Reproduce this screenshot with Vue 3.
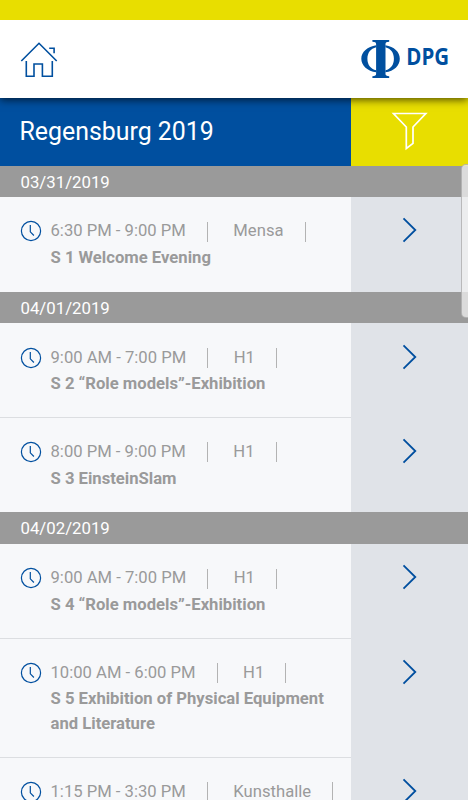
<template>
  <div class="screen">
    <div class="status-bar"></div>

    <header class="app-header">
      <!-- Home -->
      <svg class="home-icon" width="38" height="38" viewBox="0 0 38 38" fill="none">
        <path d="M1.3 21L19 3.300l17.700 17.700" />
        <path d="M6.300 21v15.200h7.700V24h8.400v12.200h9.900V21" />
        <path d="M29.200 8.300h4.900v5" />
      </svg>

      <!-- Logo -->
      <div class="logo">
        <svg width="39" height="38" viewBox="0 0 39 38" fill="#004f9f">
          <path d="M11.4 0h16.8v1.7c-2.6.2-3.7.7-3.7 2.2v30.2c0 1.5 1.1 2 3.7 2.2V38H11.4v-1.7c2.6-.2 3.7-.7 3.7-2.2V3.9c0-1.5-1.1-2-3.7-2.2z" />
          <path d="M15.2 5.3C6.5 6.500.3 12 .3 18.800s6.200 12.400 14.900 13.500v-2C9.500 29 6.400 24.700 6.400 18.800S9.500 8.600 15.200 7.300z" />
          <path d="M24.400 5.300c8.700 1.200 14.400 6.700 14.400 13.500s-5.700 12.400-14.400 13.500v-2c5.500-1.300 8.500-5.600 8.500-11.500S29.900 8.600 24.400 7.300z" />
        </svg>
        <span class="logo-text">DPG</span>
      </div>
    </header>

    <div class="title-bar">
      <h1 class="title">Regensburg 2019</h1>
      <button class="filter-btn" aria-label="Filter">
        <svg width="37" height="40" viewBox="0 0 37 40" fill="none">
          <path d="M2.500 1.500h32.300L22 15v16.300l-6.700 5.200V15z" />
        </svg>
      </button>
    </div>

    <main class="schedule">
      <section v-for="day in days" :key="day.date">
        <div class="date">{{ day.date }}</div>
        <div v-for="item in day.items" :key="item.time" class="entry">
          <div class="entry-main">
            <svg class="clock-icon" width="22" height="22" viewBox="0 0 22 22" fill="none">
              <circle cx="11" cy="11" r="9.600" />
              <path d="M10.300 5v6.800l3.600 3.700" />
            </svg>
            <div class="entry-body">
              <div class="meta">
                <span class="meta-part">{{ item.time }}</span>
                <span class="meta-part">{{ item.place }}</span>
              </div>
              <div v-if="item.title" class="entry-title">{{ item.title }}</div>
            </div>
          </div>
          <div class="entry-link">
            <svg width="16" height="26" viewBox="0 0 16 26" fill="none">
              <path d="M1.500 1.300L13.300 13 1.500 24.700" />
            </svg>
          </div>
        </div>
      </section>
    </main>

    <div class="scroll-thumb"></div>
  </div>
</template>

<script setup>
const days = [
  {
    date: "03/31/2019",
    items: [
      { time: "6:30 PM - 9:00 PM", place: "Mensa", title: "S 1 Welcome Evening" },
    ],
  },
  {
    date: "04/01/2019",
    items: [
      { time: "9:00 AM - 7:00 PM", place: "H1", title: "S 2 “Role models”-Exhibition" },
      { time: "8:00 PM - 9:00 PM", place: "H1", title: "S 3 EinsteinSlam" },
    ],
  },
  {
    date: "04/02/2019",
    items: [
      { time: "9:00 AM - 7:00 PM", place: "H1", title: "S 4 “Role models”-Exhibition" },
      {
        time: "10:00 AM - 6:00 PM",
        place: "H1",
        title: "S 5 Exhibition of Physical Equipment and Literature",
      },
      { time: "1:15 PM - 3:30 PM", place: "Kunsthalle" },
    ],
  },
];
</script>

<style>
body {
  margin: 0;
}
</style>

<style scoped>
.screen {
  position: relative;
  width: 100%;
  height: 800px;
  overflow: hidden;
  display: flex;
  flex-direction: column;
  background: #f7f8fa;
  font-family: Roboto, "Liberation Sans", sans-serif;
}

.status-bar {
  position: relative;
  z-index: 2;
  flex: none;
  height: 20px;
  background: #e8de00;
}

.app-header {
  position: relative;
  z-index: 1;
  flex: none;
  height: 78px;
  box-sizing: border-box;
  padding: 0 19px 0 20px;
  display: flex;
  align-items: center;
  justify-content: space-between;
  background: #fff;
  box-shadow: 0 2px 8px rgba(0, 0, 0, 0.65);
}

.home-icon {
  stroke: #004f9f;
  stroke-width: 1.6;
}

.logo {
  display: flex;
  align-items: center;
  gap: 3px;
}

.logo-text {
  margin-bottom: 3px;
  font-family: "Open Sans", "Noto Sans", sans-serif;
  font-size: 22.5px;
  font-weight: 700;
  line-height: 1;
  color: #004f9f;
  transform: scaleX(0.91);
  transform-origin: right;
}

.logo svg {
  margin-right: 2px;
  transform: translateX(3px);
}

.title-bar {
  flex: none;
  display: flex;
  height: 67.5px;
}

.title {
  flex: none;
  width: 351px;
  box-sizing: border-box;
  margin: 0;
  padding-left: 19.5px;
  background: #004f9f;
  color: #fff;
  font-size: 24.9px;
  font-weight: 400;
  line-height: 67px;
}

.filter-btn {
  flex: 1;
  display: flex;
  align-items: center;
  justify-content: center;
  padding: 0;
  border: none;
  background: #e8de00;
}

.filter-btn svg {
  stroke: #fff;
  stroke-width: 1.7;
}

.schedule {
  flex: none;
}

.date {
  height: 31.7px;
  box-sizing: border-box;
  padding-left: 20.5px;
  background: #9a9a9a;
  color: #fff;
  font-size: 16.8px;
  line-height: 33px;
}

.entry {
  display: flex;
}

.entry-main {
  width: 351px;
  box-sizing: border-box;
  display: flex;
  gap: 8.5px;
  padding: 22.3px 20px 20px;
  border-bottom: 1px solid #dcdee1;
  background: #f7f8fa;
}

.entry:last-child .entry-main {
  border-bottom-color: #f7f8fa;
}

.clock-icon {
  flex: none;
  margin-top: 1px;
  stroke: #004f9f;
  stroke-width: 1.2;
}

.entry-body {
  color: #9a9a9a;
  font-size: 16.65px;
  line-height: 24.6px;
}

.meta {
  display: flex;
  align-items: center;
  white-space: nowrap;
}

.meta-part {
  display: flex;
  align-items: center;
  font-weight: 400;
}

.meta-part::after {
  content: "";
  width: 1px;
  height: 20px;
  margin: 0 25.5px 0 21px;
  background: #b3b3b3;
}

.entry-title {
  margin-top: 2px;
  font-weight: 700;
}

.entry-link {
  flex: 1;
  display: flex;
  justify-content: center;
  align-items: flex-start;
  padding-top: 20.2px;
  background: #e0e3e8;
}

.entry-link svg {
  stroke: #004f9f;
  stroke-width: 1.8;
}

.scroll-thumb {
  position: absolute;
  top: 164px;
  right: -4px;
  z-index: 2;
  width: 9px;
  height: 152px;
  border: 1px solid rgba(150, 150, 150, 0.6);
  border-radius: 5px;
  background: rgba(240, 240, 240, 0.75);
}
</style>
